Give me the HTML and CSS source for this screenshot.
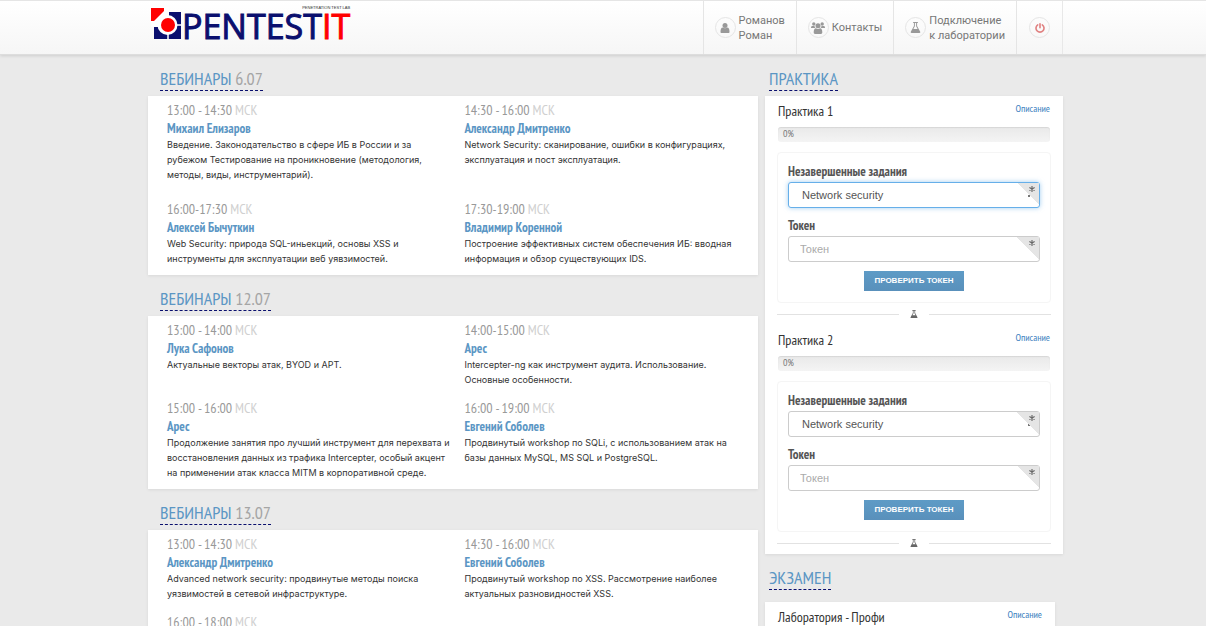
FILE: index.html
```html
<!DOCTYPE html>
<html lang="ru">
<head>
    <meta charset="UTF-8">
    <meta name="viewport" content="width=device-width, initial-scale=1.0">
    <title>PentestIT</title>
    <link rel="stylesheet" href="styles.css">
</head>
<body>

<svg class="sprite" aria-hidden="true">
    <symbol id="flask" viewBox="0 0 14 14">
        <path d="M4 0h6v1.200H9v4l4 7.300c.4.800 0 1.500-.9 1.500H1.900c-.9 0-1.300-.7-.9-1.500L5 5.200v-4H4zM6.200 1.200v4.300L4.300 9h5.400L7.800 5.500V1.200z"/>
    </symbol>
    <symbol id="asterisk" viewBox="0 0 8 8">
        <path d="M4 0v8M.5 2l7 4M7.500 2l-7 4" stroke="#666" stroke-width="1.500"/>
    </symbol>
</svg>

<header class="header">
    <div class="container header-row">
        <a href="#" class="logo">
            <svg class="logo-mark" viewBox="0 0 31 33" aria-hidden="true">
                <path fill="#0a0f6e" d="M3 5h27v27H3z"/>
                <path fill="#fff" d="M0 0h18v12L9 20H0z"/>
                <path fill="#f00" d="M0 1h13v3L3 14H0z"/>
                <circle cx="16.500" cy="18" r="10" fill="#fff"/>
                <path stroke="#fff" stroke-width="1.500" d="M16.500 18h14M17 18v15"/>
                <circle cx="17" cy="18" r="7" fill="#f00"/>
            </svg>
            <span class="logo-text">PENTEST<span class="red">IT</span></span>
            <span class="logo-sub">PENETRATION TEST LAB</span>
        </a>
        <nav class="nav">
            <a href="#">
                <span class="circle"><svg width="10" height="10" viewBox="0 0 10 10"><circle cx="5" cy="2.500" r="2.500"/><path d="M3 4.500c1 .9 3 .9 4 0 2 0 2.500 2 2.500 4.500 0 .7-.4 1-1 1h-7c-.6 0-1-.3-1-1C.500 6.500 1 4.500 3 4.500z"/></svg></span>
                <span>Романов<br>Роман</span>
            </a>
            <a href="#">
                <span class="circle"><svg width="14" height="12" viewBox="0 0 14 12"><circle cx="2.800" cy="2" r="1.700"/><circle cx="11.200" cy="2" r="1.700"/><path d="M0 6c0-1.500.5-2 1.500-2h2c.2 1 .5 1.500 1 2H0zM14 6c0-1.500-.5-2-1.500-2h-2c-.2 1-.5 1.500-1 2H14z"/><circle cx="7" cy="3.700" r="2.500"/><path d="M5 6.300c1 .8 3 .8 4 0 1.700 0 2.300 1.700 2.300 4 0 1-.5 1.700-1.300 1.700H4c-.8 0-1.300-.7-1.300-1.700 0-2.300.6-4 2.300-4z"/></svg></span>
                <span>Контакты</span>
            </a>
            <a href="#">
                <span class="circle"><svg width="11" height="11"><use href="#flask"/></svg></span>
                <span>Подключение<br>к лаборатории</span>
            </a>
            <a href="#" class="nav-exit" aria-label="Выход">
                <span class="circle"><svg width="10" height="10" viewBox="0 0 10 10" fill="none" stroke="#e08080" stroke-width="1.600" stroke-linecap="round"><path d="M5 .8v4M2.700 1.900a4 4 0 1 0 4.600 0"/></svg></span>
            </a>
        </nav>
    </div>
</header>

<div class="container columns">
    <main class="webinars">
        <h2><span>Вебинары <em>6.07</em></span></h2>
        <section class="card schedule schedule-loose">
            <article>
                <p class="time">13:00 - 14:30 <span>МСК</span></p>
                <h3>Михаил Елизаров</h3>
                <p>Введение. Законодательство в сфере ИБ в России и за рубежом Тестирование на проникновение (методология, методы, виды, инструментарий).</p>
            </article>
            <article>
                <p class="time">14:30 - 16:00 <span>МСК</span></p>
                <h3>Александр Дмитренко</h3>
                <p>Network Security: сканирование, ошибки в конфигурациях, эксплуатация и пост эксплуатация.</p>
            </article>
            <article>
                <p class="time">16:00-17:30 <span>МСК</span></p>
                <h3>Алексей Бычуткин</h3>
                <p>Web Security: природа SQL-иньекций, основы XSS и инструменты для эксплуатации веб уявзимостей.</p>
            </article>
            <article>
                <p class="time">17:30-19:00 <span>МСК</span></p>
                <h3>Владимир Коренной</h3>
                <p>Построение эффективных систем обеспечения ИБ: вводная информация и обзор существующих IDS.</p>
            </article>
        </section>

        <h2><span>Вебинары <em>12.07</em></span></h2>
        <section class="card schedule">
            <article>
                <p class="time">13:00 - 14:00 <span>МСК</span></p>
                <h3>Лука Сафонов</h3>
                <p>Актуальные векторы атак, BYOD и APT.</p>
            </article>
            <article>
                <p class="time">14:00-15:00 <span>МСК</span></p>
                <h3>Арес</h3>
                <p>Intercepter-ng как инструмент аудита. Использование. Основные особенности.</p>
            </article>
            <article>
                <p class="time">15:00 - 16:00 <span>МСК</span></p>
                <h3>Арес</h3>
                <p>Продолжение занятия про лучший инструмент для перехвата и восстановления данных из трафика Intercepter, особый акцент на применении атак класса MITM в корпоративной среде.</p>
            </article>
            <article>
                <p class="time">16:00 - 19:00 <span>МСК</span></p>
                <h3>Евгений Соболев</h3>
                <p>Продвинутый workshop по SQLi, с использованием атак на базы данных MySQL, MS SQL и PostgreSQL.</p>
            </article>
        </section>

        <h2><span>Вебинары <em>13.07</em></span></h2>
        <section class="card schedule">
            <article>
                <p class="time">13:00 - 14:30 <span>МСК</span></p>
                <h3>Александр Дмитренко</h3>
                <p>Advanced network security: продвинутые методы поиска уязвимостей в сетевой инфраструктуре.</p>
            </article>
            <article>
                <p class="time">14:30 - 16:00 <span>МСК</span></p>
                <h3>Евгений Соболев</h3>
                <p>Продвинутый workshop по XSS. Рассмотрение наиболее актуальных разновидностей XSS.</p>
            </article>
            <article>
                <p class="time">16:00 - 18:00 <span>МСК</span></p>
            </article>
        </section>
    </main>

    <aside class="sidebar">
        <h2><span>Практика</span></h2>
        <section class="card tasks">
            <div class="task">
                <div class="task-head"><h4>Практика 1</h4><a href="#">Описание</a></div>
                <div class="progress">0%</div>
                <form class="task-form">
                    <label for="task1">Незавершенные задания</label>
                    <div class="field">
                        <select id="task1" class="active"><option>Network security</option></select>
                        <span class="corner"><svg width="6" height="6"><use href="#asterisk"/></svg></span>
                    </div>
                    <label for="token1">Токен</label>
                    <div class="field">
                        <input id="token1" type="text" placeholder="Токен">
                        <span class="corner"><svg width="6" height="6"><use href="#asterisk"/></svg></span>
                    </div>
                    <button type="button">Проверить токен</button>
                </form>
                <div class="divider"><svg width="8" height="8"><use href="#flask"/></svg></div>
            </div>
            <div class="task">
                <div class="task-head"><h4>Практика 2</h4><a href="#">Описание</a></div>
                <div class="progress">0%</div>
                <form class="task-form">
                    <label for="task2">Незавершенные задания</label>
                    <div class="field">
                        <select id="task2"><option>Network security</option></select>
                        <span class="corner"><svg width="6" height="6"><use href="#asterisk"/></svg></span>
                    </div>
                    <label for="token2">Токен</label>
                    <div class="field">
                        <input id="token2" type="text" placeholder="Токен">
                        <span class="corner"><svg width="6" height="6"><use href="#asterisk"/></svg></span>
                    </div>
                    <button type="button">Проверить токен</button>
                </form>
                <div class="divider"><svg width="8" height="8"><use href="#flask"/></svg></div>
            </div>
        </section>

        <h2 class="exam-title"><span>Экзамен</span></h2>
        <section class="card tasks exam">
            <div class="task-head"><h4>Лаборатория - Профи</h4><a href="#">Описание</a></div>
        </section>
    </aside>
</div>

</body>
</html>
```
FILE: styles.css
```css
:root{
    --blue: #5b96c4;
    --navy: #0a0f6e;
    --narrow: "PT Sans Narrow", "Liberation Sans Narrow", "Liberation Sans", sans-serif;
}

*{
    margin: 0;
    padding: 0;
    box-sizing: border-box;
}

body{
    background: #eaeaea;
    color: #333;
    font: 9px/15px Inter, "Liberation Sans", Arial, sans-serif;
    height: 100vh;
    overflow: hidden;
}

a{
    text-decoration: none;
}

.sprite{
    display: none;
}

.container{
    max-width: 920px;
    margin: 0 auto;
    padding-left: 5px;
}

/* header */
.header{
    background: linear-gradient(#fff, #f6f6f6);
    border-top: 1px solid #e5e5e5;
    border-bottom: 1px solid #ddd;
    box-shadow: 0 1px 3px rgba(0, 0, 0, .12);
}

.header-row{
    display: flex;
    justify-content: space-between;
    height: 53px;
}

.logo{
    position: relative;
    display: flex;
    align-items: flex-start;
    padding: 6px 0 0 3px;
    color: var(--navy);
}

.logo-mark{
    width: 31px;
    height: 33px;
}

.logo-text{
    font: 34px/38px "Open Sans", "Noto Sans", sans-serif;
    -webkit-text-stroke: 1px;
}

.logo-text .red{
    color: #f00;
}

.logo-sub{
    position: absolute;
    top: 4px;
    right: 0;
    font: 4px/6px "Liberation Sans", sans-serif;
    color: #333;
    white-space: nowrap;
}

.nav{
    display: flex;
    border-right: 1px solid #e8e8e8;
}

.nav a{
    display: flex;
    align-items: center;
    gap: 3px;
    padding: 0 11px;
    border-left: 1px solid #e5e5e5;
    color: #777;
    font: 11px/15px Roboto, sans-serif;
}

.nav .nav-exit{
    padding: 0 12px;
}

.circle{
    display: flex;
    align-items: center;
    justify-content: center;
    width: 21px;
    height: 21px;
    border: 1px solid #e5e5e5;
    border-radius: 50%;
    fill: #999;
}

/* columns */
.columns{
    display: grid;
    grid-template-columns: 610fr 298fr;
    gap: 7px;
    align-items: start;
}

h2{
    height: 41px;
    padding: 13px 12px 0;
    font: 18px/22px var(--narrow);
    color: var(--blue);
    text-transform: uppercase;
}

h2 span{
    display: inline-block;
    border-bottom: 1px dashed var(--navy);
}

h2 em{
    font-style: normal;
    color: #a5a5a5;
}

.card{
    background: #fff;
    box-shadow: 0 1px 3px rgba(0, 0, 0, .08);
}

.schedule{
    display: grid;
    grid-template-columns: 1fr 1fr;
    gap: 11px 12px;
    padding: 4px 8px 9px 19px;
}

.schedule-loose{
    row-gap: 17px;
}

.time{
    font: 14px/20px var(--narrow);
    color: #999;
}

.time span{
    color: #d0d0d0;
}

h3{
    font: bold 13px/17px var(--narrow);
    color: var(--blue);
}

/* sidebar */
.sidebar h2{
    padding: 13px 4px 0;
}

.tasks{
    padding: 0 12px;
}

.task-head{
    display: flex;
    justify-content: space-between;
    padding: 5px 1px 0;
    height: 31px;
}

.task-head h4{
    font: 14px/20px var(--narrow);
}

.task-head a{
    color: #3d7fc0;
    font: 10px/16px var(--narrow);
}

.progress{
    height: 15px;
    margin: 0 1px 10px;
    padding: 0 5px;
    border-radius: 3px;
    background: linear-gradient(#e9e9e9, #f4f4f4);
    box-shadow: inset 0 1px 1px rgba(0, 0, 0, .08);
    color: #777;
    font: 10px/14px var(--narrow);
}

.task-form{
    padding: 10px 10px 11px;
    border: 1px solid #f5f5f5;
    border-radius: 4px;
}

.task-form label{
    display: block;
    font: bold 13px/18px var(--narrow);
    color: #555;
}

.field{
    position: relative;
    height: 26px;
    margin: 1px 0 9px;
}

.field select,
.field input{
    display: block;
    width: 100%;
    height: 26px;
    padding: 0 11px;
    border: 1px solid #ccc;
    border-radius: 3px;
    background: #fff;
    color: #555;
    font: 11px/24px "Liberation Sans", sans-serif;
    outline: none;
}

.field select{
    appearance: none;
    padding: 0 13px;
    background: linear-gradient(#777, #777) no-repeat right 9px bottom 10px / 2px 2px #fff;
}

.field select.active{
    border-color: #66afe9;
    box-shadow: 0 0 5px rgba(102, 175, 233, .6);
}

.field input::placeholder{
    color: #aaa;
}

.corner{
    position: absolute;
    top: 1px;
    right: 1px;
    width: 22px;
    height: 22px;
    padding: 0 4px;
    background: linear-gradient(to top right, transparent 50%, #e5e5e5 50%);
    text-align: right;
    line-height: 12px;
    pointer-events: none;
}

.task-form button{
    display: block;
    margin: 0 auto;
    height: 20px;
    padding: 0 10px;
    border: 0;
    background: linear-gradient(#5e9bc6, #5990bb);
    color: #fff;
    font: bold 8px/20px "Liberation Sans", sans-serif;
    text-transform: uppercase;
}

.divider{
    display: flex;
    align-items: center;
    gap: 11px;
    height: 22px;
    fill: #666;
}

.divider::before,
.divider::after{
    content: "";
    flex: 1;
    border-top: 1px solid #e2e2e2;
}

.sidebar .exam-title{
    margin-bottom: 7px;
}

.exam{
    margin-right: 8px;
}
```
